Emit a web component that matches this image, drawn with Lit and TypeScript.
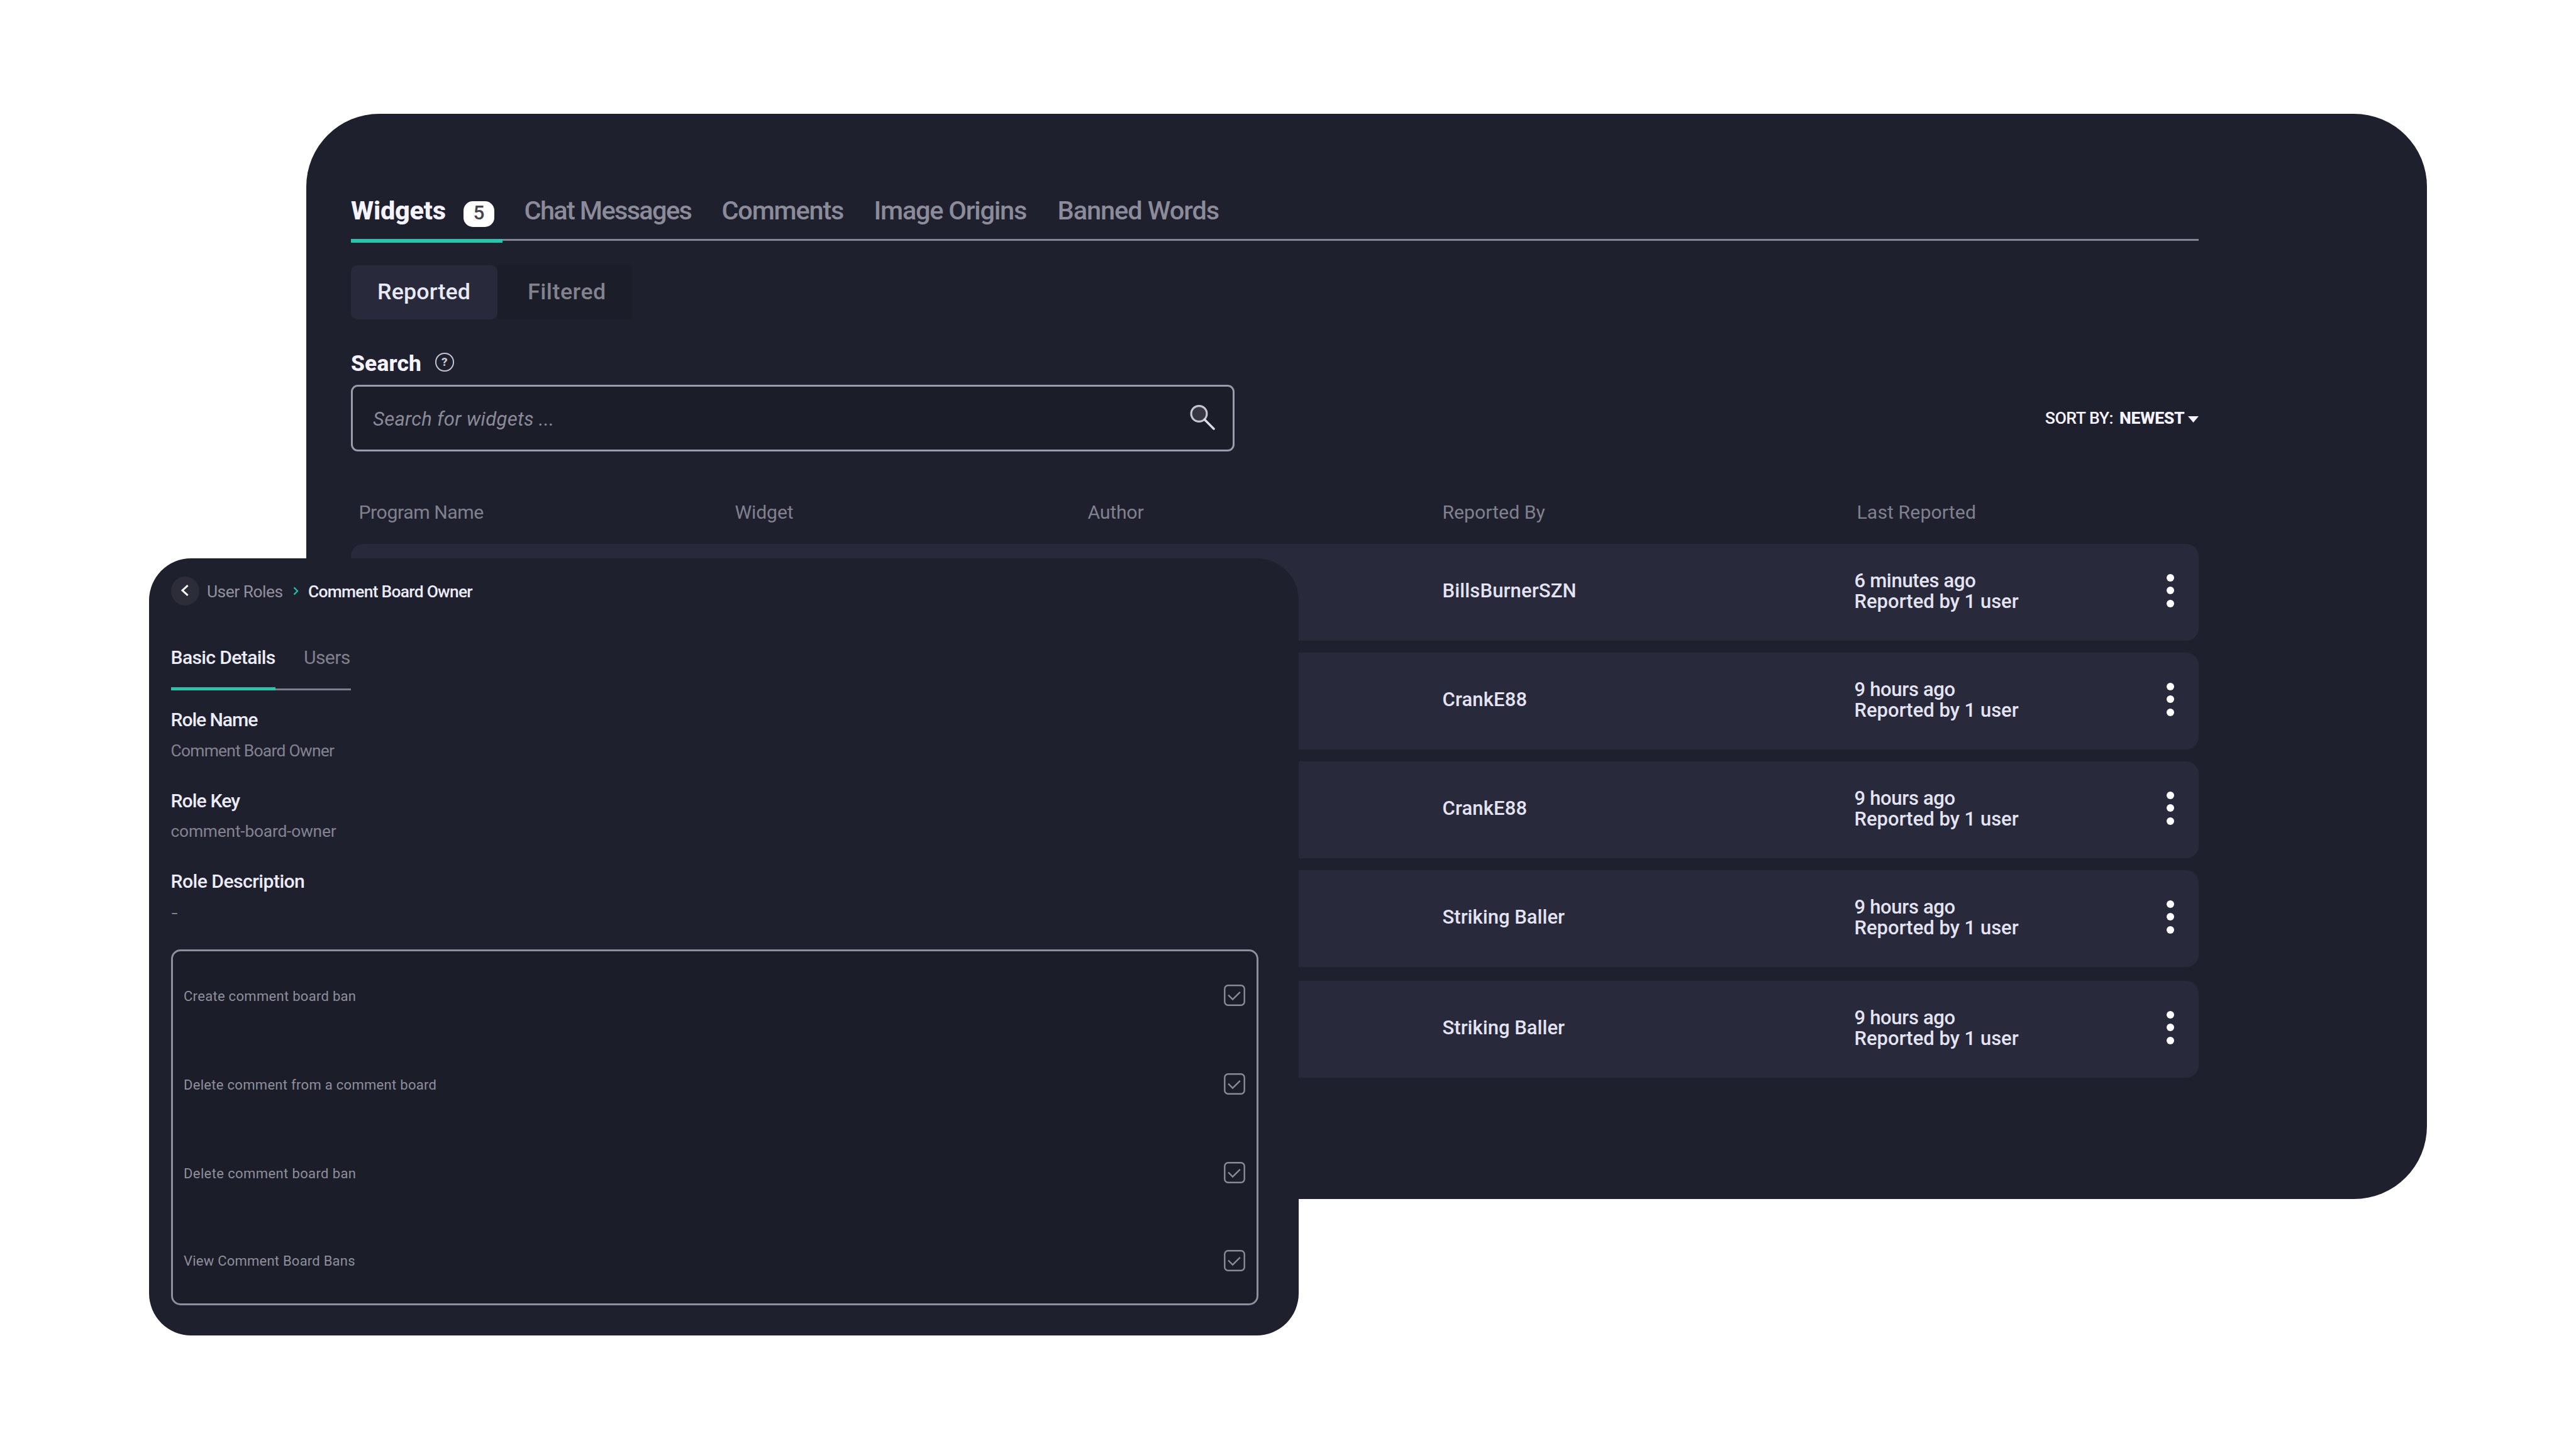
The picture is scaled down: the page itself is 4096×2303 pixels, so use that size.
import { LitElement, html, css } from 'lit';
import { customElement } from 'lit/decorators.js';
import { classMap } from 'lit/directives/class-map.js';

interface Report {
  by: string;
  kind: string;
  when: string;
}

const TABS = ['Widgets', 'Chat Messages', 'Comments', 'Image Origins', 'Banned Words'];
const COLUMNS = ['Program Name', 'Widget', 'Author', 'Reported By', 'Last Reported'];
const REPORTS: Report[] = [
  { by: 'BillsBurnerSZN', kind: 'mixed', when: '6 minutes ago' },
  { by: 'CrankE88', kind: 'mixed', when: '9 hours ago' },
  { by: 'CrankE88', kind: 'mixed', when: '9 hours ago' },
  { by: 'Striking Baller', kind: 'plain', when: '9 hours ago' },
  { by: 'Striking Baller', kind: 'plain', when: '9 hours ago' },
];
const PERMISSIONS = [
  'Create comment board ban',
  'Delete comment from a comment board',
  'Delete comment board ban',
  'View Comment Board Bans',
];

@customElement('moderation-panel')
class ModerationPanel extends LitElement {
  static styles = css`
    :host {
      display: block;
      box-sizing: border-box;
      width: 3372px;
      height: 1726px;
      padding: 119px 363px 0 70.5px;
      border-radius: 116px;
      background: #1f202e;
      color: #e9e9f6;
      white-space: nowrap;
    }
    .tabs {
      position: relative;
      display: grid;
      grid-template-columns: 276px 314px 242px 292px 1fr;
      height: 80px;
      border-bottom: 3px solid #858595;
      font-size: 41.5px;
      font-weight: 500;
      line-height: 69px;
      color: #8b8b99;
    }
    .tab:nth-child(2) { letter-spacing: -1.67px; }
    .tab:nth-child(3) { letter-spacing: -1.23px; }
    .tab:nth-child(4) { letter-spacing: -1.25px; }
    .tab:nth-child(5) { letter-spacing: -1.05px; }
    .tab.active {
      display: flex;
      height: 80px;
      color: #f4f3ff;
      font-weight: 800;
      letter-spacing: -0.25px;
    }
    .tab.active::after {
      content: '';
      position: absolute;
      left: 0;
      top: 80px;
      width: 241.5px;
      height: 6px;
      background: #25c6ad;
    }
    .name { width: 179.5px; padding-left: 0.5px; box-sizing: border-box; }
    .badge {
      box-sizing: border-box;
      width: 48.5px;
      height: 41px;
      margin-top: 19.5px;
      border-radius: 15px;
      background: #ffffff;
      color: #44444f;
      font-size: 31.5px;
      font-weight: 500;
      line-height: 38px;
      text-align: center;
    }
    .switch {
      display: flex;
      margin-top: 39px;
      height: 85.5px;
      font-size: 35.8px;
      line-height: 85px;
    }
    .option {
      box-sizing: border-box;
      width: 214px;
      padding-left: 48.5px;
      background: #1b1d29;
      color: #82828f;
      letter-spacing: 0.5px;
      font-weight: 500;
      border-radius: 4px;
    }
    .option.on {
      width: 233px;
      padding-left: 42.5px;
      border-radius: 10px;
      background: #28293b;
      color: #e9e9f6;
      letter-spacing: 0.15px;
    }
    .label {
      display: flex;
      align-items: center;
      height: 43px;
      margin-top: 49px;
      font-size: 35.3px;
      font-weight: 800;
      letter-spacing: 0.2px;
      color: #f4f3ff;
    }
    .caption { width: 134px; padding-left: 0.5px; }
    .help {
      box-sizing: border-box;
      width: 29.5px;
      height: 29.5px;
      margin-top: -4px;
      border: 2.6px solid #c4c4d0;
      border-radius: 50%;
      font-size: 19px;
      line-height: 25px;
      letter-spacing: 0;
      text-align: center;
      color: #c9c9d5;
    }
    .bar {
      display: flex;
      align-items: center;
      justify-content: space-between;
      margin-top: 12px;
      height: 107px;
    }
    .field {
      box-sizing: border-box;
      display: flex;
      align-items: center;
      justify-content: space-between;
      width: 1405.5px;
      height: 106px;
      padding: 0 27px 0 32.5px;
      border: 3px solid #9b9bad;
      border-radius: 11px;
      background: #1b1d29;
    }
    .placeholder {
      padding-top: 3px;
      font-size: 31px;
      font-style: italic;
      letter-spacing: 0.3px;
      color: #8a8a98;
    }
    .lens { display: block; width: 44px; height: 44px; margin-top: -6px; }
    .sort {
      display: flex;
      align-items: center;
      font-size: 26.7px;
      font-weight: 500;
      letter-spacing: -0.5px;
      color: #f4f3ff;
    }
    .value { margin-left: 10px; font-weight: 800; letter-spacing: -0.3px; }
    .caret { display: block; width: 17px; height: 10px; margin-left: 5.5px; margin-top: 4px; }
    .columns {
      display: grid;
      grid-template-columns: 598px 561px 563px 656px 1fr;
      padding-left: 13px;
    }
    .head {
      margin-top: 61.5px;
      height: 85px;
      font-size: 30.2px;
      line-height: 69.5px;
      color: #80808e;
    }
    .head span:nth-child(1) { letter-spacing: -0.43px; }
    .head span:nth-child(2) { letter-spacing: -0.18px; }
    .head span:nth-child(3) { letter-spacing: -0.2px; }
    .head span:nth-child(4) { padding-left: 1px; }
    .head span:nth-child(5) { padding-left: 4px; letter-spacing: 0.1px; }
    .rows { display: flex; flex-direction: column; gap: 19px; }
    .row {
      box-sizing: border-box;
      height: 154px;
      border-radius: 20px;
      background: #28293b;
      font-size: 31px;
      font-weight: 500;
      color: #e3e3f1;
    }
    .row:last-child { margin-top: 3px; }
    .by { grid-column: 4; padding: 2px 0 0 1px; line-height: 146px; }
    .mixed { letter-spacing: 0.14px; }
    .plain { letter-spacing: 0.02px; }
    .last { display: flex; justify-content: space-between; padding-right: 39.5px; }
    .lines { padding-top: 41.5px; line-height: 33.9px; }
    .when { letter-spacing: -0.32px; }
    .dots {
      display: flex;
      flex-direction: column;
      gap: 8.7px;
      padding-top: 47.5px;
    }
    .dot { width: 12px; height: 12px; border-radius: 50%; background: #ffffff; }
  `;

  render() {
    return html`
      <div class="tabs">
        ${TABS.map((tab, i) => html`
          <div class=${classMap({ tab: true, active: i === 0 })}>
            ${i === 0
              ? html`<span class="name">${tab}</span><span class="badge">${REPORTS.length}</span>`
              : tab}
          </div>`)}
      </div>
      <div class="switch">
        <div class="option on">Reported</div>
        <div class="option">Filtered</div>
      </div>
      <div class="label"><span class="caption">Search</span><span class="help">?</span></div>
      <div class="bar">
        <div class="field">
          <span class="placeholder">Search for widgets ...</span>
          <svg class="lens" viewBox="0 0 44 44">
            <circle cx="17.5" cy="18" r="12.4" fill="#373744" stroke="#c6c6d3" stroke-width="3.2" />
            <path d="M26.3 27.2 L41 42" stroke="#dcdce8" stroke-width="3.6" stroke-linecap="round" />
          </svg>
        </div>
        <div class="sort">
          <span>SORT BY:</span><span class="value">NEWEST</span>
          <svg class="caret" viewBox="0 0 17 10"><path d="M0 0H17L8.5 10Z" fill="#f4f3ff" /></svg>
        </div>
      </div>
      <div class="head columns">${COLUMNS.map((c) => html`<span>${c}</span>`)}</div>
      <div class="rows">
        ${REPORTS.map((r) => html`
          <div class="row columns">
            <div class="by ${r.kind}">${r.by}</div>
            <div class="last">
              <div class="lines">
                <div class="when">${r.when}</div>
                <div>Reported by 1 user</div>
              </div>
              <div class="dots"><i class="dot"></i><i class="dot"></i><i class="dot"></i></div>
            </div>
          </div>`)}
      </div>
    `;
  }
}

@customElement('role-panel')
class RolePanel extends LitElement {
  static styles = css`
    :host {
      display: block;
      box-sizing: border-box;
      width: 1828.5px;
      height: 1235.5px;
      padding: 28px 64.5px 0 35px;
      border-radius: 67px;
      background: #1f202e;
      color: #ececf8;
      white-space: nowrap;
    }
    .crumbs {
      display: flex;
      align-items: center;
      height: 47px;
      font-size: 26.4px;
      line-height: 47px;
    }
    .back {
      display: flex;
      align-items: center;
      justify-content: center;
      width: 45px;
      height: 46px;
      border-radius: 50%;
      background: #2c2d39;
    }
    .back svg { display: block; width: 14px; height: 20px; margin: -2px 1px 0 0; }
    .parent { width: 137px; margin: 3px 0 0 12.5px; letter-spacing: -0.5px; color: #91919e; }
    .sep { display: block; width: 9px; height: 14px; margin-right: 15px; }
    .here { margin-top: 3px; font-weight: 500; letter-spacing: -0.72px; }
    .tabs {
      position: relative;
      box-sizing: border-box;
      display: grid;
      grid-template-columns: 211.5px 1fr;
      width: 286px;
      height: 88px;
      margin-top: 47px;
      border-bottom: 3px solid #7e7e8e;
      font-size: 30.2px;
      line-height: 71px;
    }
    .tab { color: #7f7f8d; letter-spacing: -0.65px; }
    .tab.active { color: #ececf8; font-weight: 500; letter-spacing: -0.68px; }
    .tab.active::after {
      content: '';
      position: absolute;
      left: 0;
      top: 83px;
      width: 166.5px;
      height: 5px;
      background: #25c6ad;
    }
    .fields { margin: 22px 0 0; line-height: 49.5px; }
    .entry { height: 128.5px; }
    .term { font-size: 30.2px; font-weight: 500; letter-spacing: -0.92px; }
    .entry:nth-child(1) .term { letter-spacing: -1.1px; }
    .entry:nth-child(3) .term { letter-spacing: -0.55px; }
    .detail { margin: 0; font-size: 26.4px; letter-spacing: -0.74px; color: #838390; }
    .entry:nth-child(2) .detail { letter-spacing: -0.22px; }
    .entry:nth-child(3) .detail { font-family: Inter, Roboto, sans-serif; }
    .list {
      box-sizing: border-box;
      height: 566px;
      margin-top: 4px;
      padding: 0 18px 0 17.5px;
      border: 3px solid #8e8f9f;
      border-radius: 15px;
      background: #1b1d29;
      font-size: 22px;
      color: #8f8f9c;
    }
    .item {
      display: flex;
      align-items: center;
      justify-content: space-between;
      height: 141px;
      letter-spacing: 0.3px;
    }
    .item span { padding-top: 2px; }
    .item:nth-child(3) { letter-spacing: 0.39px; }
    .item:nth-child(4) { height: 138px; letter-spacing: 0.23px; }
    .box { display: block; width: 34px; height: 34px; }
  `;

  private entry(term: string, detail: string) {
    return html`<div class="entry"><div class="term">${term}</div><div class="detail">${detail}</div></div>`;
  }

  render() {
    return html`
      <div class="crumbs">
        <span class="back">
          <svg viewBox="0 0 14 20">
            <path d="M11.6 2.2 L3 10 L11.6 17.8" fill="none" stroke="#ffffff" stroke-width="3" />
          </svg>
        </span>
        <span class="parent">User Roles</span>
        <svg class="sep" viewBox="0 0 9 14">
          <path d="M1.5 1.3 L7 7 L1.5 12.7" fill="none" stroke="#22b9a1" stroke-width="2.4" />
        </svg>
        <span class="here">Comment Board Owner</span>
      </div>
      <div class="tabs">
        <span class="tab active">Basic Details</span>
        <span class="tab">Users</span>
      </div>
      <div class="fields">
        ${this.entry('Role Name', 'Comment Board Owner')}
        ${this.entry('Role Key', 'comment-board-owner')}
        ${this.entry('Role Description', '-')}
      </div>
      <div class="list">
        ${PERMISSIONS.map((p) => html`
          <div class="item">
            <span>${p}</span>
            <svg class="box" viewBox="0 0 34 34" fill="none" stroke="#8b8b98" stroke-width="2.4">
              <rect x="1.3" y="1.3" width="31.4" height="31.4" rx="5.5" />
              <path d="M7 16.5 L14 23.6 L25.8 11.8" />
            </svg>
          </div>`)}
      </div>
    `;
  }
}

@customElement('app-root')
class AppRoot extends LitElement {
  static styles = css`
    :host {
      display: block;
      position: relative;
      width: 4096px;
      height: 2303px;
      overflow: hidden;
      background: #ffffff;
      font-family: Roboto, 'Open Sans', sans-serif;
    }
    .window { position: absolute; }
    .moderation { left: 487px; top: 181px; }
    .role { left: 236.5px; top: 888px; }
  `;

  render() {
    return html`
      <moderation-panel class="window moderation"></moderation-panel>
      <role-panel class="window role"></role-panel>
    `;
  }
}
